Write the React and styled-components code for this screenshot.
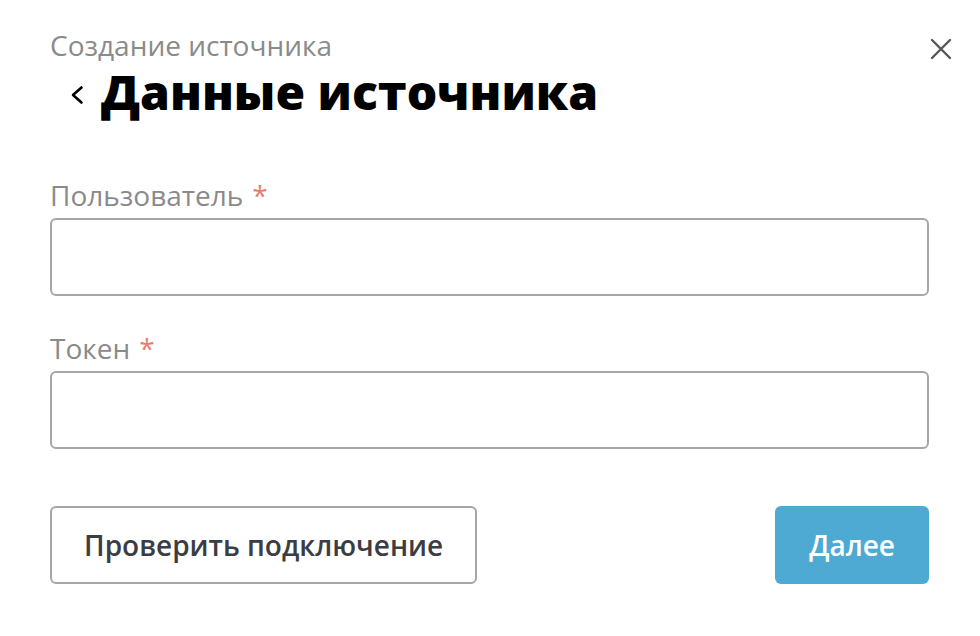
import React from "react";
import styled, { createGlobalStyle } from "styled-components";

const Global = createGlobalStyle`
  html, body { margin: 0; padding: 0; background: #fff; }
  body { font-family: "Open Sans", "Noto Sans", sans-serif; }
  * { box-sizing: border-box; }
`;

const Dialog = styled.div`
  position: relative;
  width: 980px;
  height: 636px;
  padding: 26px 51px 0 50px;
  display: flex;
  flex-direction: column;
`;

const Close = styled.button`
  position: absolute;
  top: 37px;
  right: 27px;
  width: 24px;
  height: 24px;
  padding: 0;
  border: none;
  background: none;
  display: flex;
  align-items: center;
  justify-content: center;
  cursor: pointer;
`;

const Subtitle = styled.div`
  font-size: 28px;
  line-height: 38px;
  color: #8a8a8a;
`;

const TitleRow = styled.div`
  display: flex;
  align-items: center;
  gap: 17px;
  margin-left: 20px;
`;

const Back = styled.button`
  border: none;
  background: none;
  padding: 0;
  margin-top: 6px;
  display: flex;
  cursor: pointer;
`;

const Title = styled.h1`
  margin: 0;
  font-size: 48px;
  line-height: 56px;
  font-weight: 800;
  color: #000;
`;

const Field = styled.div`
  display: flex;
  flex-direction: column;
  margin-top: ${(p) => p.$top}px;
`;

const Label = styled.label`
  font-size: 28px;
  line-height: 38px;
  color: #8a8a8a;
  margin-bottom: 4px;
`;

const Req = styled.span`
  color: #ea7c6e;
  margin-left: 9px;
`;

const Input = styled.input`
  height: 78px;
  width: 100%;
  border: 2px solid #a6a6a6;
  border-radius: 6px;
  font-family: inherit;
  font-size: 24px;
  padding: 0 16px;
  outline: none;
`;

const Actions = styled.div`
  display: flex;
  justify-content: space-between;
  margin-top: 57px;
`;

const Button = styled.button`
  height: 78px;
  padding: 0 ${(p) => p.$px}px;
  border-radius: 6px;
  font-family: inherit;
  font-size: 28px;
  font-weight: 600;
  cursor: pointer;
  border: ${(p) => (p.$primary ? "none" : "2px solid #a6a6a6")};
  background: ${(p) => (p.$primary ? "#4eaad3" : "#fff")};
  color: ${(p) => (p.$primary ? "#fff" : "#3c3c43")};
`;

export default function App() {
  return (
    <>
      <Global />
      <Dialog>
        <Close aria-label="Закрыть">
          <svg width="22" height="22" viewBox="0 0 22 22">
            <path d="M2 2 L20 20 M20 2 L2 20" stroke="#55555c" strokeWidth="2.4" strokeLinecap="round" />
          </svg>
        </Close>
        <Subtitle>Создание источника</Subtitle>
        <TitleRow>
          <Back aria-label="Назад">
            <svg width="14" height="20" viewBox="0 0 14 20">
              <path d="M11.5 2.5 L3 10 L11.5 17.5" fill="none" stroke="#000" strokeWidth="2.6" strokeLinecap="round" strokeLinejoin="round" />
            </svg>
          </Back>
          <Title>Данные источника</Title>
        </TitleRow>
        <Field $top={56}>
          <Label>
            Пользователь<Req>*</Req>
          </Label>
          <Input />
        </Field>
        <Field $top={33}>
          <Label>
            Токен<Req>*</Req>
          </Label>
          <Input />
        </Field>
        <Actions>
          <Button $px={32}>Проверить подключение</Button>
          <Button $primary $px={34}>Далее</Button>
        </Actions>
      </Dialog>
    </>
  );
}
